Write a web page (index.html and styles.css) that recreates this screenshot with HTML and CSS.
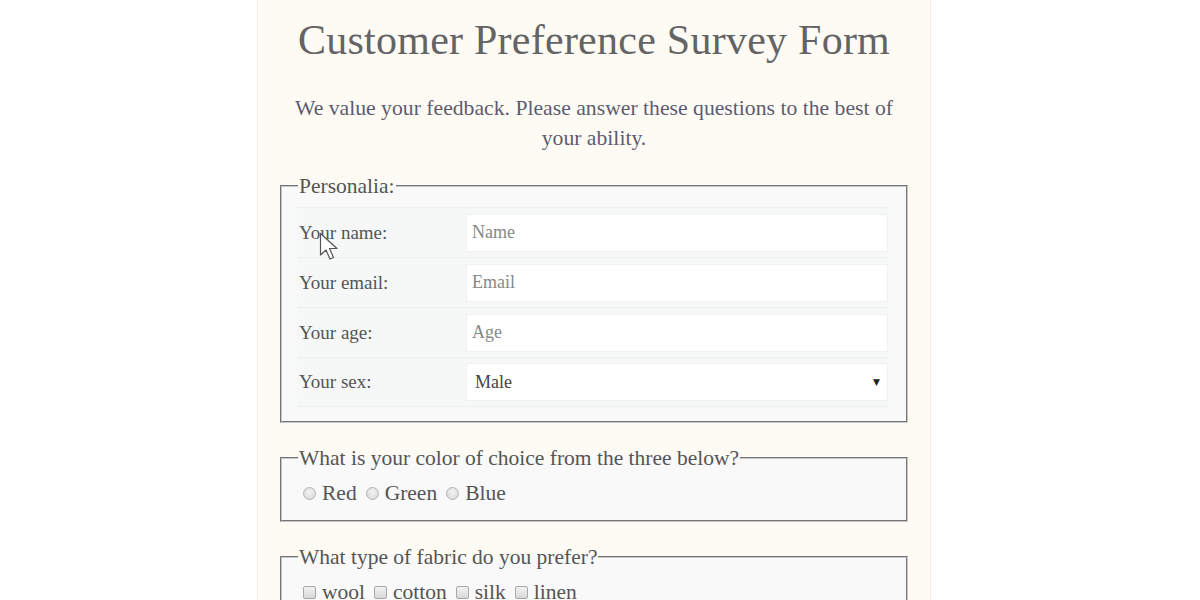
FILE: index.html
```html
<!DOCTYPE html>
<html lang="en">
<head>
<meta charset="utf-8">
<title>Customer Preference Survey Form</title>
<link rel="stylesheet" href="styles.css">
</head>
<body>
<main class="page">
  <h1 class="title">Customer Preference Survey Form</h1>
  <p class="intro">We value your feedback. Please answer these questions to the best of your ability.</p>
  <form class="survey">
    <fieldset class="group">
      <legend class="legend">Personalia:</legend>
      <div class="row">
        <label class="label" for="name">Your name:</label>
        <input class="field" id="name" type="text" placeholder="Name">
      </div>
      <div class="row">
        <label class="label" for="email">Your email:</label>
        <input class="field" id="email" type="email" placeholder="Email">
      </div>
      <div class="row">
        <label class="label" for="age">Your age:</label>
        <input class="field" id="age" type="number" placeholder="Age">
      </div>
      <div class="row">
        <label class="label" for="sex">Your sex:</label>
        <div class="select">
          <span class="select-value">Male</span>
          <span class="select-arrow">▼</span>
        </div>
      </div>
    </fieldset>
    <fieldset class="group choice">
      <legend class="legend">What is your color of choice from the three below?</legend>
      <div class="options">
        <label class="option"><span class="radio"></span>Red</label>
        <label class="option"><span class="radio"></span>Green</label>
        <label class="option"><span class="radio"></span>Blue</label>
      </div>
    </fieldset>
    <fieldset class="group choice">
      <legend class="legend">What type of fabric do you prefer?</legend>
      <div class="options">
        <label class="option"><span class="check"></span>wool</label>
        <label class="option"><span class="check"></span>cotton</label>
        <label class="option"><span class="check"></span>silk</label>
        <label class="option"><span class="check"></span>linen</label>
      </div>
    </fieldset>
  </form>
  <svg class="cursor" width="22" height="29" viewBox="0 0 22 29"><path d="M1.5 1.5 L1.5 23 L7 18 L11 27 L14.5 25.5 L10.5 16.5 L18 16.5 Z" fill="#fff" stroke="#555" stroke-width="1.2" stroke-linejoin="round"/></svg>
</main>
</body>
</html>
```
FILE: styles.css
```css
html, body {
  margin: 0;
  padding: 0;
  background: #ffffff;
}
body {
  font-family: "Liberation Serif", "DejaVu Serif", serif;
  color: #555;
}
.page {
  position: relative;
  width: 674px;
  margin-left: 257px;
  min-height: 600px;
  background: #fefbf5;
  border-left: 1px solid #f1eee8;
  border-right: 1px solid #f1eee8;
  box-sizing: border-box;
  padding: 14px 22px 0 22px;
}
.title {
  margin: 0;
  text-align: center;
  font-size: 42px;
  font-weight: normal;
  color: #646464;
  line-height: 52px;
  letter-spacing: 0.25px;
}
.intro {
  margin: 27px 0 0;
  text-align: center;
  font-size: 21.7px;
  line-height: 30px;
  color: #5d5c70;
}
.survey {
  margin-top: 22px;
}
.group {
  margin: 0 0 24px 0;
  padding: 10px 18px 14px 15px;
  border: 2px groove #c8c8c8;
  background: #f8f9f8;
}
.legend {
  padding: 0 1px;
  margin-left: 1px;
  font-size: 21.5px;
  color: #555;
  line-height: 22px;
}
.row {
  display: grid;
  grid-template-columns: 167px 1fr;
  align-items: center;
  height: 50px;
  border-top: 1px solid #eeefef;
  background: #f6f8f8;
  padding: 0 0 0 2px;
  box-sizing: border-box;
}
.row:last-child {
  border-bottom: 1px solid #eeefef;
}
.label {
  font-size: 19px;
  color: #555;
}
.field, .select {
  height: 38px;
  box-sizing: border-box;
  border: 1px solid #f1f1f1;
  background: #fff;
  font-family: "Liberation Serif", "DejaVu Serif", serif;
  font-size: 18px;
  padding: 0 5px;
  color: #333;
  outline: none;
  width: 100%;
}
.field::placeholder {
  color: #888;
}
.select {
  display: flex;
  align-items: center;
  justify-content: space-between;
  padding: 0 7px 0 8px;
  font-size: 18px;
  color: #444;
}
.select-arrow {
  font-family: "DejaVu Sans", sans-serif;
  font-size: 9px;
  color: #222;
}
.choice {
  padding-top: 8px;
  padding-bottom: 14px;
}
.options {
  display: flex;
  gap: 9px;
  padding: 4px 0 0 6px;
  font-size: 21.5px;
  color: #555;
}
.option {
  display: flex;
  align-items: center;
  gap: 6px;
}
.radio {
  width: 13px;
  height: 13px;
  border-radius: 50%;
  border: 1px solid #b5b5b5;
  background: radial-gradient(circle at 50% 40%, #f4f4f4, #d4d4d4);
  box-sizing: border-box;
}
.check {
  width: 13px;
  height: 13px;
  border-radius: 2px;
  border: 1px solid #a8a8a8;
  background: linear-gradient(#f2f2f2, #d8d8d8);
  box-sizing: border-box;
}
.cursor {
  position: absolute;
  left: 61px;
  top: 232px;
}
```
